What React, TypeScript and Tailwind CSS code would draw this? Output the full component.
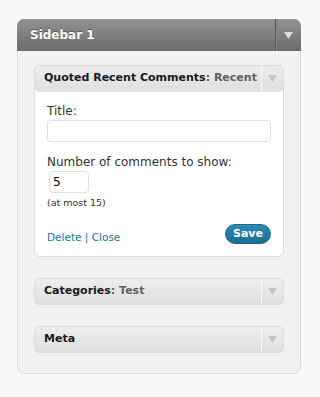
import React from "react";

function Arrow({ color }: { color: string }) {
    return (
        <svg width="9" height="7" viewBox="0 0 9 7">
            <path d="M0 0 L9 0 L4.5 7 Z" fill={color} />
        </svg>
    );
}

function WidgetHeader({ title, sub }: { title: string; sub?: string }) {
    return (
        <div className="flex h-[27px] items-stretch rounded-[6px] border border-[#dcdcdc] bg-gradient-to-b from-[#ededed] to-[#dfdfdf]">
            <div className="flex min-w-0 flex-1 items-center overflow-hidden whitespace-nowrap pl-[9px] text-[11px] font-bold text-[#1a1a1a]">
                {title}
                {sub && <span className="text-[#606060]">: {sub}</span>}
            </div>
            <div className="flex w-[22px] shrink-0 items-center justify-center border-l border-[#f8f8f8]">
                <Arrow color="#c4c4c4" />
            </div>
        </div>
    );
}

export default function App() {
    return (
        <div className="min-h-[397px] bg-[#f9f9f9] pl-[17px] pt-[19px] font-['DejaVu_Sans',sans-serif]">
            <div className="w-[284px] rounded-[7px] border border-[#dcdcdc] bg-[#f1f1f1]">
                {/* Sidebar header */}
                <div className="-mx-px -mt-px flex h-[32px] items-stretch rounded-t-[7px] bg-gradient-to-b from-[#929292] to-[#6b6b6b]">
                    <div className="flex flex-1 items-center pl-[13px] text-[12px] font-bold text-white [text-shadow:0_-1px_0_#555]">
                        Sidebar 1
                    </div>
                    <div className="flex w-[26px] items-center justify-center border-l border-[#555] shadow-[inset_1px_0_0_#8a8a8a]">
                        <Arrow color="#dcdcdc" />
                    </div>
                </div>

                <div className="flex flex-col gap-[21px] pb-[20px] pl-4 pr-[16px] pt-[14px]">
                    {/* Open widget */}
                    <div className="rounded-[6px] border border-[#dcdcdc] bg-white">
                        <div className="-m-px">
                            <WidgetHeader title="Quoted Recent Comments" sub="Recent comments" />
                        </div>
                        <div className="px-[12px] pb-[10px] pt-[12px] text-[12px] text-[#333]">
                            <div className="leading-[16px]">Title:</div>
                            <div className="mt-[1px] h-[22px] w-full rounded-[4px] border border-[#dfdfdf] bg-white" />
                            <div className="mt-[12px] leading-[16px]">Number of comments to show:</div>
                            <div className="ml-[2px] mt-[1px] flex h-[22px] w-[40px] items-center rounded-[4px] border border-[#dfdfdf] bg-white pl-[3px] text-[12px] text-black">
                                5
                            </div>
                            <div className="mt-[3px] text-[9.5px] leading-[13px] text-[#333]">(at most 15)</div>
                            <div className="mt-[14px] flex items-center justify-between">
                                <div className="pt-[7px] text-[10.5px] text-[#21759b]">
                                    Delete | Close
                                </div>
                                <button className="h-[20px] rounded-full border border-[#1f6a8c] bg-gradient-to-b from-[#2e8ab5] to-[#1f6c91] px-[7px] text-[11px] font-bold text-white">
                                    Save
                                </button>
                            </div>
                        </div>
                    </div>

                    <WidgetHeader title="Categories" sub="Test" />
                    <WidgetHeader title="Meta" />
                </div>
            </div>
        </div>
    );
}
